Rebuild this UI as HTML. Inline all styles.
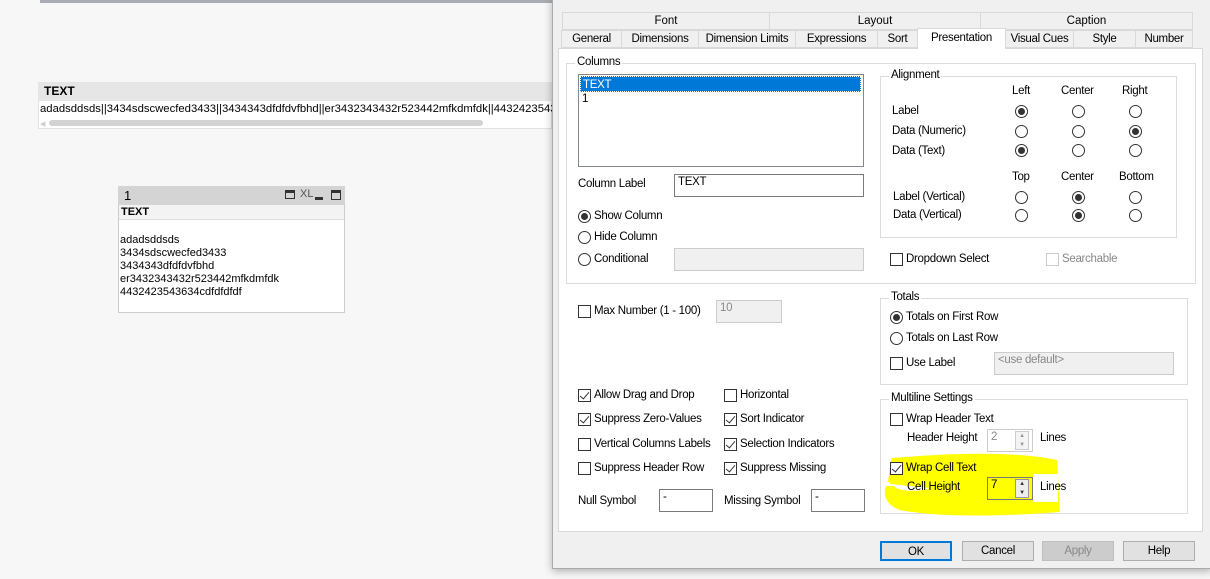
<!DOCTYPE html>
<html><head><style>
*{margin:0;padding:0;box-sizing:border-box}
body{width:1210px;height:579px;position:relative;overflow:hidden;background:#f7f7f7;font-family:"Liberation Sans",sans-serif;font-size:11.5px;color:#000}
.a{position:absolute;white-space:nowrap}
.tab{position:absolute;height:18px;border:1px solid #d9d9d9;background:#f0f0f0;text-align:center;line-height:17px;font-size:11.5px}
.grp{position:absolute;border:1px solid #dcdcdc}
.gl{position:absolute;top:-8px;left:8px;background:#fff;padding:0 2px}
.rb{position:absolute;width:13px;height:13px;border:1px solid #333;border-radius:50%;background:#fff}
.rb.on::after{content:"";position:absolute;left:2px;top:2px;width:7px;height:7px;border-radius:50%;background:#333}
.cb{position:absolute;width:13px;height:13px;border:1px solid #333;background:#fff}
.cb.on::after{content:"";position:absolute;left:3px;top:0px;width:4px;height:8px;border-right:1.5px solid #333;border-bottom:1.5px solid #333;transform:rotate(40deg)}
.inp{position:absolute;border:1px solid #7a7a7a;background:#fff;padding:1px 3px}
.dis{background:#f0f0f0;border-color:#ccc;color:#888}
.btn{position:absolute;top:541px;height:20px;width:72px;border:1px solid #adadad;background:#e1e1e1;text-align:center;line-height:18px}
.d{letter-spacing:-0.3px}
</style></head><body>
<div class="a" style="left:40px;top:0;width:512px;height:3px;background:#a9acb2"></div>
<div class="a" style="left:38px;top:82px;width:514px;height:47px;background:#fff;border:1px solid #e2e2e2"></div>
<div class="a" style="left:38px;top:82px;width:514px;height:19px;background:#e6e6e6;font-weight:bold;padding-left:6px;line-height:19px;font-size:12px">TEXT</div>
<div class="a" style="left:40px;top:103px;font-size:11.3px">adadsddsds||3434sdscwecfed3433||3434343dfdfdvfbhd||er3432343432r523442mfkdmfdk||44324235436</div>
<div class="a" style="left:49px;top:120px;width:434px;height:6px;background:#d3d3d3;border-radius:3px"></div>
<div class="a" style="left:40px;top:120px;color:#ccc;font-size:7px">◀</div>

<div class="a" style="left:118px;top:186px;width:227px;height:127px;background:#fff;border:1px solid #ccc"></div>
<div class="a" style="left:118px;top:186px;width:227px;height:19px;background:#d4d4d4;padding-left:6px;font-size:13px;line-height:19px">1</div>
<div class="a" style="left:285px;top:190px;width:10px;height:9px;border:1px solid #333;border-top-width:3px"></div>
<div class="a" style="left:300px;top:188px;font-size:11px;color:#555">XL</div>
<div class="a" style="left:315px;top:197px;width:8px;height:3px;background:#333"></div>
<div class="a" style="left:331px;top:190px;width:10px;height:10px;border:1.5px solid #333;border-top-width:3px"></div>
<div class="a" style="left:119px;top:205px;width:225px;height:15px;background:#f3f3f3;border-bottom:1px solid #ddd;font-weight:bold;font-size:11px;padding-left:2px;line-height:15px">TEXT</div>
<div class="a" style="left:120px;top:234px;font-size:11px;line-height:13px">adadsddsds<br>3434sdscwecfed3433<br>3434343dfdfdvfbhd<br>er3432343432r523442mfkdmfdk<br>4432423543634cdfdfdfdf</div>

<div class="a" style="left:552px;top:-2px;width:660px;height:571px;background:#f0f0f0;border:1px solid #aaa;box-shadow:0 2px 8px rgba(0,0,0,.3)"></div>
<div class="tab" style="left:562px;top:12px;width:208px">Font</div>
<div class="tab" style="left:769px;top:12px;width:212px">Layout</div>
<div class="tab" style="left:980px;top:12px;width:213px">Caption</div>
<div class="tab d" style="left:561px;top:30px;width:61px">General</div>
<div class="tab d" style="left:621px;top:30px;width:78px">Dimensions</div>
<div class="tab d" style="left:698px;top:30px;width:98px">Dimension Limits</div>
<div class="tab d" style="left:795px;top:30px;width:83px">Expressions</div>
<div class="tab d" style="left:877px;top:30px;width:41px">Sort</div>
<div class="tab d" style="left:1005px;top:30px;width:69px">Visual Cues</div>
<div class="tab d" style="left:1073px;top:30px;width:63px">Style</div>
<div class="tab d" style="left:1135px;top:30px;width:58px">Number</div>
<div class="a" style="left:558px;top:48px;width:645px;height:484px;background:#fff;border:1px solid #d9d9d9"></div>
<div class="tab d" style="left:917px;top:28px;width:89px;height:21px;background:#fff;border-bottom:none;line-height:19px">Presentation</div>

<div class="d">
<div class="grp" style="left:566px;top:63px;width:630px;height:221px"><span class="gl">Columns</span></div>
<div class="a" style="left:578px;top:74px;width:286px;height:93px;border:1px solid #828790;background:#fff"></div>
<div class="a" style="left:580px;top:76px;width:281px;height:16px;background:#0078d7;color:#fff;padding-left:2px;line-height:16px;border:1px dotted #ffd">TEXT</div>
<div class="a" style="left:582px;top:93px">1</div>
<div class="a" style="left:578px;top:178px">Column Label</div>
<div class="inp" style="left:674px;top:174px;width:190px;height:23px">TEXT</div>
<div class="rb on" style="left:578px;top:210px"></div><div class="a" style="left:594px;top:210px">Show Column</div>
<div class="rb" style="left:578px;top:231px"></div><div class="a" style="left:594px;top:231px">Hide Column</div>
<div class="rb" style="left:578px;top:253px"></div><div class="a" style="left:594px;top:253px">Conditional</div>
<div class="inp dis" style="left:674px;top:248px;width:190px;height:23px"></div>

<div class="grp" style="left:880px;top:76px;width:297px;height:162px"><span class="gl">Alignment</span></div>
<div class="a" style="left:1012px;top:85px">Left</div><div class="a" style="left:1061px;top:85px">Center</div><div class="a" style="left:1122px;top:85px">Right</div>
<div class="a" style="left:892px;top:105px">Label</div><div class="a" style="left:892px;top:125px">Data (Numeric)</div><div class="a" style="left:892px;top:145px">Data (Text)</div>
<div class="rb on" style="left:1015px;top:105px"></div><div class="rb" style="left:1072px;top:105px"></div><div class="rb" style="left:1129px;top:105px"></div>
<div class="rb" style="left:1015px;top:125px"></div><div class="rb" style="left:1072px;top:125px"></div><div class="rb on" style="left:1129px;top:125px"></div>
<div class="rb on" style="left:1015px;top:144px"></div><div class="rb" style="left:1072px;top:144px"></div><div class="rb" style="left:1129px;top:144px"></div>
<div class="a" style="left:1012px;top:171px">Top</div><div class="a" style="left:1061px;top:171px">Center</div><div class="a" style="left:1119px;top:171px">Bottom</div>
<div class="a" style="left:893px;top:191px">Label (Vertical)</div><div class="a" style="left:893px;top:209px">Data (Vertical)</div>
<div class="rb" style="left:1015px;top:191px"></div><div class="rb on" style="left:1072px;top:191px"></div><div class="rb" style="left:1129px;top:191px"></div>
<div class="rb" style="left:1015px;top:209px"></div><div class="rb on" style="left:1072px;top:209px"></div><div class="rb" style="left:1129px;top:209px"></div>
<div class="cb" style="left:890px;top:253px"></div><div class="a" style="left:906px;top:253px">Dropdown Select</div>
<div class="cb" style="left:1046px;top:253px;border-color:#ccc"></div><div class="a" style="left:1062px;top:253px;color:#888">Searchable</div>

<div class="cb" style="left:578px;top:305px"></div><div class="a" style="left:594px;top:305px">Max Number (1 - 100)</div>
<div class="inp dis" style="left:716px;top:300px;width:66px;height:23px">10</div>

<div class="grp" style="left:880px;top:298px;width:308px;height:87px"><span class="gl">Totals</span></div>
<div class="rb on" style="left:890px;top:311px"></div><div class="a" style="left:906px;top:311px">Totals on First Row</div>
<div class="rb" style="left:890px;top:332px"></div><div class="a" style="left:906px;top:332px">Totals on Last Row</div>
<div class="cb" style="left:890px;top:357px"></div><div class="a" style="left:906px;top:357px">Use Label</div>
<div class="inp dis" style="left:994px;top:352px;width:180px;height:23px">&lt;use default&gt;</div>

<div class="cb on" style="left:578px;top:389px"></div><div class="a" style="left:594px;top:389px">Allow Drag and Drop</div>
<div class="cb on" style="left:578px;top:413px"></div><div class="a" style="left:594px;top:413px">Suppress Zero-Values</div>
<div class="cb" style="left:578px;top:438px"></div><div class="a" style="left:594px;top:438px">Vertical Columns Labels</div>
<div class="cb" style="left:578px;top:462px"></div><div class="a" style="left:594px;top:462px">Suppress Header Row</div>
<div class="cb" style="left:724px;top:389px"></div><div class="a" style="left:740px;top:389px">Horizontal</div>
<div class="cb on" style="left:724px;top:413px"></div><div class="a" style="left:740px;top:413px">Sort Indicator</div>
<div class="cb on" style="left:724px;top:438px"></div><div class="a" style="left:740px;top:438px">Selection Indicators</div>
<div class="cb on" style="left:724px;top:462px"></div><div class="a" style="left:740px;top:462px">Suppress Missing</div>
<div class="a" style="left:578px;top:495px">Null Symbol</div>
<div class="inp" style="left:659px;top:489px;width:54px;height:23px">-</div>
<div class="a" style="left:724px;top:495px">Missing Symbol</div>
<div class="inp" style="left:811px;top:489px;width:54px;height:23px">-</div>

<div class="grp" style="left:880px;top:399px;width:308px;height:115px"><span class="gl">Multiline Settings</span></div>
<svg class="a" style="left:880px;top:452px" width="185" height="66"><path d="M12 6 C60 2 130 -2 177 8 L180 60 C130 64 60 66 20 58 C8 54 2 44 6 34 L14 34 C18 40 40 40 50 36 L10 32 Z" fill="#ffff00"/><path d="M8 30 C10 16 10 10 12 6 L50 34 Z" fill="#ffff00"/></svg>
<div class="a" style="left:1033px;top:474px;width:25px;height:28px;background:#fff"></div>
<div class="cb" style="left:890px;top:413px"></div><div class="a" style="left:906px;top:413px">Wrap Header Text</div>
<div class="a" style="left:907px;top:432px">Header Height</div>
<div class="inp dis" style="left:987px;top:429px;width:46px;height:23px;background:#fff">2</div>
<div class="a" style="left:1015px;top:431px;width:14px;height:19px;border:1px solid #ccc;background:#f4f4f4;font-size:6px;line-height:9px;text-align:center;color:#999">▲<br>▼</div>
<div class="a" style="left:1040px;top:432px">Lines</div>
<div class="cb on" style="left:890px;top:462px"></div><div class="a" style="left:906px;top:462px">Wrap Cell Text</div>
<div class="a" style="left:907px;top:481px">Cell Height</div>
<div class="inp" style="left:987px;top:477px;width:46px;height:23px;background:transparent">7</div>
<div class="a" style="left:1015px;top:479px;width:14px;height:19px;border:1px solid #999;background:#eee;font-size:6px;line-height:9px;text-align:center;color:#333">▲<br>▼</div>
<div class="a" style="left:1040px;top:481px">Lines</div>

<div class="btn" style="left:880px;border:2px solid #0078d7">OK</div>
<div class="btn" style="left:962px">Cancel</div>
<div class="btn" style="left:1042px;background:#ccc;border-color:#bfbfbf;color:#888">Apply</div>
<div class="btn" style="left:1123px">Help</div>
</div>
</body></html>
